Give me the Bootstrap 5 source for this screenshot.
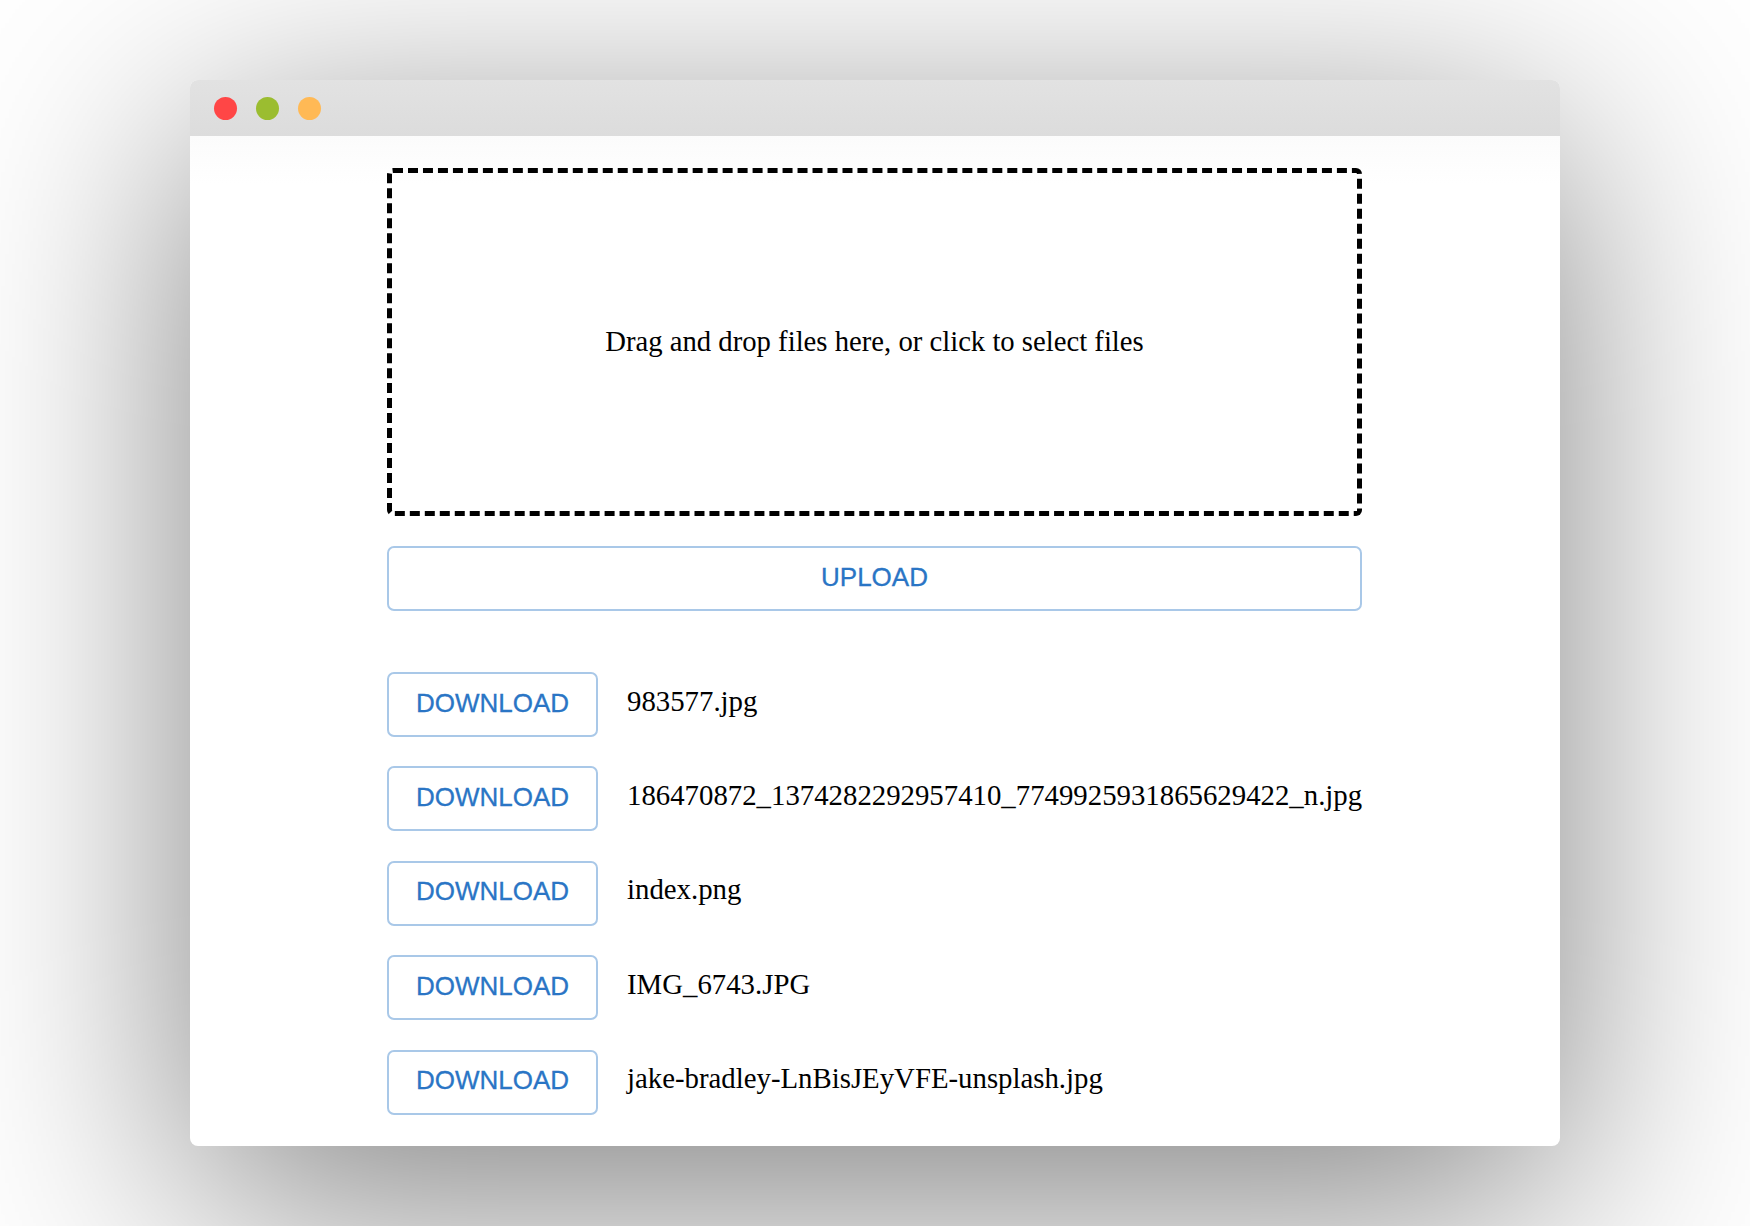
<!DOCTYPE html>
<html lang="en">
<head>
    <meta charset="UTF-8">
    <meta name="viewport" content="width=device-width, initial-scale=1.0">
    <title>File Upload</title>
    <link rel="stylesheet" href="https://cdn.jsdelivr.net/npm/bootstrap@5.3.0/dist/css/bootstrap.min.css">
    <style>
        html, body { height: 1226px; overflow: hidden; }
        body { background: #fff; font-family: "Liberation Serif", serif; color: #000; }
        .app-window { width: 1370px; height: 1066px; margin: 80px auto 0 190px; border-radius: 8px; background: #fff; box-shadow: 0 58px 246px rgba(0,0,0,.5); overflow: hidden; }
        .title-bar { height: 56px; background: linear-gradient(#e2e2e2, #dcdcdc); padding-left: 23.5px; gap: 19px; }
        .dot { width: 23px; height: 23px; border-radius: 50%; }
        .dot-red { background: #ff4646; }
        .dot-green { background: #9bbd30; }
        .dot-amber { background: #ffb955; }
        .page-body { width: 975px; margin-left: 197px; padding-top: 32px; }
        .window-fade { background: linear-gradient(#fbfbfb, #fff 48px); background-repeat: no-repeat; }
        .drop-zone { height: 348px; border: 5px dashed #000; border-radius: 6px; font-size: 28.7px; margin-bottom: 30px; }
        .btn.file-btn { height: 65px; font-family: "Liberation Sans", Arial, sans-serif; font-size: 26px; line-height: 1; color: #2a75c5; -webkit-text-stroke: .3px #2a75c5; background: #fff; border: 2px solid #a9c8e8; border-radius: 7px; padding: 0 0 4px; }
        .btn.file-btn:hover { color: #2a75c5; background: #f5f9fd; border-color: #2a75c5; }
        .upload-btn { margin-bottom: 61px; }
        .download-btn { width: 211px; flex: none; }
        .file-row { height: 65px; gap: 29px; margin-bottom: 29.4px; font-size: 28.8px; line-height: 1; white-space: nowrap; }
        .file-name { margin-bottom: 7px; }
    </style>
</head>
<body>

    <div class="app-window">
        <div class="title-bar d-flex align-items-center">
            <span class="dot dot-red"></span>
            <span class="dot dot-green"></span>
            <span class="dot dot-amber"></span>
        </div>
        <div class="window-fade">
            <div class="page-body">
                <div class="drop-zone d-flex align-items-center justify-content-center">
                    <p class="m-0">Drag and drop files here, or click to select files</p>
                </div>
                <button type="button" class="btn file-btn upload-btn w-100 d-block">UPLOAD</button>
                <div id="fileList"></div>
            </div>
        </div>
    </div>

    <script>
        const files = [
            "983577.jpg",
            "186470872_1374282292957410_7749925931865629422_n.jpg",
            "index.png",
            "IMG_6743.JPG",
            "jake-bradley-LnBisJEyVFE-unsplash.jpg"
        ];

        document.getElementById("fileList").innerHTML = files.map(name => `
            <div class="file-row d-flex align-items-center">
                <button type="button" class="btn file-btn download-btn">DOWNLOAD</button>
                <span class="file-name">${name}</span>
            </div>
        `).join('');
    </script>
    <script src="https://cdn.jsdelivr.net/npm/bootstrap@5.3.0/dist/js/bootstrap.bundle.min.js"></script>

</body>
</html>
